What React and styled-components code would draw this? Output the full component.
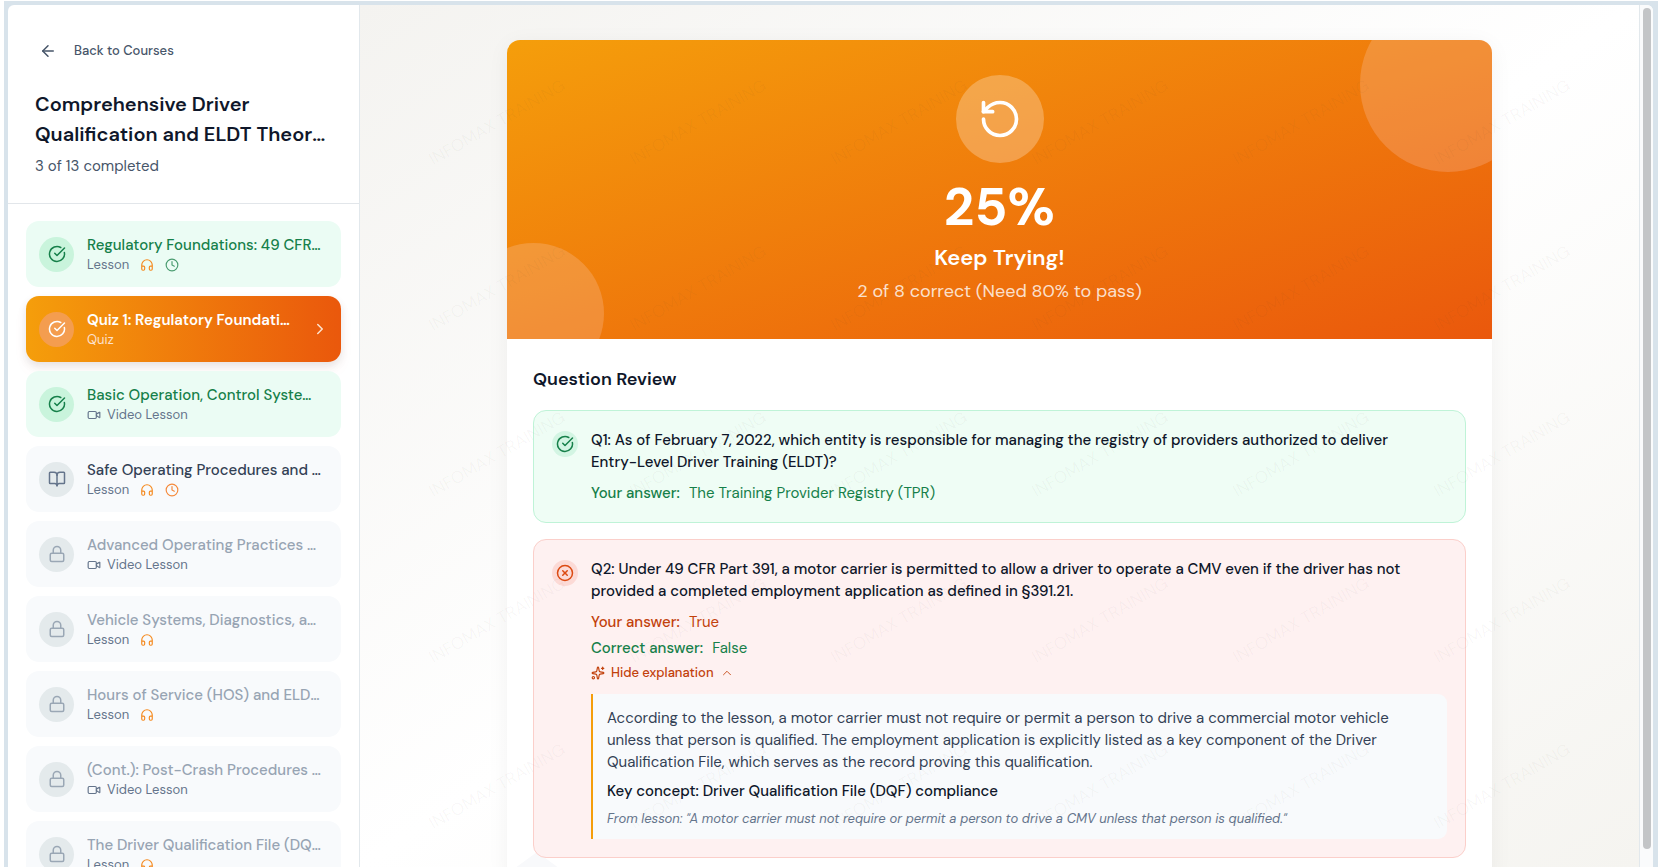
import styled, { createGlobalStyle, css } from 'styled-components';
import {
  ArrowLeft,
  BookOpen,
  ChevronRight,
  ChevronUp,
  CircleCheckBig,
  CircleX,
  Clock,
  Headphones,
  Lock,
  RotateCcw,
  Sparkles,
  Video,
} from 'lucide-react';

const lessons = [
  { title: 'Regulatory Foundations: 49 CFR Parts 380 and 391', type: 'Lesson', state: 'done', audio: true, timer: true },
  { title: 'Quiz 1: Regulatory Foundations', type: 'Quiz', state: 'active' },
  { title: 'Basic Operation, Control Systems and Inspections', type: 'Video Lesson', state: 'done' },
  { title: 'Safe Operating Procedures and Maneuvers', type: 'Lesson', state: 'open', audio: true, timer: true },
  { title: 'Advanced Operating Practices Module', type: 'Video Lesson', state: 'locked' },
  { title: 'Vehicle Systems, Diagnostics, and Maintenance', type: 'Lesson', state: 'locked', audio: true },
  { title: 'Hours of Service (HOS) and ELD Compliance', type: 'Lesson', state: 'locked', audio: true },
  { title: '(Cont.): Post-Crash Procedures Module', type: 'Video Lesson', state: 'locked' },
  { title: 'The Driver Qualification File (DQF) Overview', type: 'Lesson', state: 'locked', audio: true },
];

const stateIcons = {
  done: CircleCheckBig,
  active: CircleCheckBig,
  open: BookOpen,
  locked: Lock,
};

const LessonItem = ({ lesson }) => {
  const { title, type, state, audio, timer } = lesson;
  const Icon = stateIcons[state];
  return (
    <li>
      <ItemButton $state={state} disabled={state === 'locked'}>
        <ItemIcon $state={state}>
          <Icon size={18} />
        </ItemIcon>
        <ItemText>
          <ItemTitle $state={state}>{title}</ItemTitle>
          <ItemMeta $state={state}>
            <MetaLabel>
              {type === 'Video Lesson' && <Video size={14} />}
              {type}
            </MetaLabel>
            {audio && <Headphones size={14} color='#f58a1f' />}
            {timer && (
              <Clock size={14} color={state === 'done' ? '#4a9c70' : '#f58a3c'} />
            )}
          </ItemMeta>
        </ItemText>
        {state === 'active' && <ChevronRight size={18} color='#fde3cf' />}
      </ItemButton>
    </li>
  );
};

const Sidebar = () => (
  <Aside>
    <SideHeader>
      <BackButton>
        <ArrowLeft size={18} />
        Back to Courses
      </BackButton>
      <CourseTitle>
        Comprehensive Driver
        <br />
        Qualification and ELDT Theory Training
      </CourseTitle>
      <Progress>3 of 13 completed</Progress>
    </SideHeader>
    <LessonList>
      {lessons.map((lesson) => (
        <LessonItem key={lesson.title} lesson={lesson} />
      ))}
    </LessonList>
  </Aside>
);

const Result = () => (
  <Hero>
    <Bubble $size={176} $top={-44} $right={-44} />
    <Bubble $size={141} $bottom={-45} $left={-44} />
    <HeroIcon>
      <RotateCcw size={44} />
    </HeroIcon>
    <Score>25%</Score>
    <Verdict>Keep Trying!</Verdict>
    <Tally>2 of 8 correct (Need 80% to pass)</Tally>
  </Hero>
);

const Review = () => (
  <ReviewSection>
    <ReviewTitle>Question Review</ReviewTitle>
    <Questions>
      <Question $correct>
        <Mark $correct>
          <CircleCheckBig size={18} />
        </Mark>
        <QuestionBody>
          <Prompt>
            Q1: As of February 7, 2022, which entity is responsible for managing
            the registry of providers authorized to deliver{' '}
            <NoBreak>Entry-Level</NoBreak> Driver Training (ELDT)?
          </Prompt>
          <Answer $correct>
            <b>Your answer:</b> The Training Provider Registry (TPR)
          </Answer>
        </QuestionBody>
      </Question>
      <Question>
        <Mark>
          <CircleX size={18} />
        </Mark>
        <QuestionBody>
          <Prompt>
            Q2: Under 49 CFR Part 391, a motor carrier is permitted to allow a
            driver to operate a CMV even if the driver has not provided a
            completed employment application as defined in §391.21.
          </Prompt>
          <Answer>
            <b>Your answer:</b> True
          </Answer>
          <Answer $correct $tight>
            <b>Correct answer:</b> False
          </Answer>
          <ToggleButton aria-expanded='true'>
            <Sparkles size={14} />
            Hide explanation
            <ChevronUp size={14} strokeWidth={1.5} />
          </ToggleButton>
          <Explanation>
            <p>
              According to the lesson, a motor carrier must not require or permit
              a person to drive a commercial motor vehicle unless that person is
              qualified. The employment application is explicitly listed as a key
              component of the Driver Qualification File, which serves as the
              record proving this qualification.
            </p>
            <KeyConcept>
              Key concept: Driver Qualification File (DQF) compliance
            </KeyConcept>
            <Quote>
              From lesson: "A motor carrier must not require or permit a person to
              drive a CMV unless that person is qualified."
            </Quote>
          </Explanation>
        </QuestionBody>
      </Question>
      <Pointer />
    </Questions>
  </ReviewSection>
);

const Watermark = () => (
  <WatermarkGrid aria-hidden='true'>
    {Array.from({ length: 30 }, (_, i) => (
      <span key={i}>INFOMAX TRAINING</span>
    ))}
  </WatermarkGrid>
);

const App = () => (
  <Frame>
    <GlobalStyle />
    <Page>
      <Sidebar />
      <Main>
        <Card>
          <Result />
          <Review />
        </Card>
        <Watermark />
      </Main>
      <Track>
        <Thumb />
      </Track>
    </Page>
  </Frame>
);

export default App;

const GlobalStyle = createGlobalStyle`
  *,
  *::before,
  *::after {
    box-sizing: border-box;
  }

  body {
    margin: 0;
    font-family: 'DM Sans', Inter, sans-serif;
    font-size: 15px;
    line-height: 22px;
    color: #0f172a;
  }

  h1, h2, h3, p, ul {
    margin: 0;
    padding: 0;
  }

  button {
    font: inherit;
    border: 0;
    cursor: pointer;
  }

  svg {
    flex-shrink: 0;
  }
`;

const Frame = styled.div`
  height: 100vh;
  overflow: hidden;
  padding: 4px 5px 0 4px;
  background: #d8e3eb;
  border-top: 1px solid #fff;
  border-left: 4px solid #fff;
`;

const Page = styled.div`
  display: flex;
  height: 100%;
  overflow: hidden;
  border-radius: 6px 6px 0 0;
  background: #fff;
`;

const Aside = styled.aside`
  flex: 0 0 352px;
  overflow: hidden;
  border-right: 1px solid #e2e8ec;
`;

const SideHeader = styled.div`
  padding: 28px 27px 26px;
  border-bottom: 1px solid #e2e6ea;
`;

const BackButton = styled.button`
  display: flex;
  align-items: center;
  gap: 17px;
  height: 36px;
  margin-bottom: 20px;
  padding: 0 4px;
  background: none;
  color: #475569;
  font-size: 13px;
  font-weight: 500;
`;

const CourseTitle = styled.h1`
  overflow: hidden;
  white-space: nowrap;
  text-overflow: ellipsis;
  font-size: 20px;
  font-weight: 600;
  line-height: 30px;
`;

const Progress = styled.p`
  margin-top: 6px;
  color: #475569;
`;

const LessonList = styled.ul`
  display: flex;
  flex-direction: column;
  gap: 9px;
  padding: 17px 18px;
  list-style: none;
`;

const itemBackground = {
  done: '#ebfcf4',
  active: 'linear-gradient(to right, #f59e0b, #ea580c)',
  open: '#f8fafc',
  locked: '#f8fafc',
};

const ItemButton = styled.button`
  display: flex;
  align-items: center;
  gap: 13px;
  width: 100%;
  height: 66px;
  padding: 0 12px 0 13px;
  border-radius: 13px;
  text-align: left;
  background: ${({ $state }) => itemBackground[$state]};
  ${({ $state }) =>
    $state === 'active' &&
    css`
      box-shadow: 0 4px 8px rgba(15, 23, 42, 0.1),
        0 8px 16px rgba(234, 88, 12, 0.04);
    `}
`;

const iconColors = {
  done: { background: '#c9f4dc', color: '#16804a' },
  active: { background: '#f49d4f', color: '#ffffff' },
  open: { background: '#e4eaec', color: '#64748b' },
  locked: { background: '#e4eaec', color: '#9aa7b5' },
};

const ItemIcon = styled.span`
  display: grid;
  place-items: center;
  flex: 0 0 35px;
  height: 35px;
  border-radius: 50%;
  background: ${({ $state }) => iconColors[$state].background};
  color: ${({ $state }) => iconColors[$state].color};
`;

const ItemText = styled.span`
  flex: 1;
  min-width: 0;
`;

const titleColors = {
  done: '#16804a',
  active: '#ffffff',
  open: '#334155',
  locked: '#97a4b3',
};

const ItemTitle = styled.span`
  display: block;
  margin-right: 6px;
  overflow: hidden;
  white-space: nowrap;
  text-overflow: ellipsis;
  font-weight: ${({ $state }) => ($state === 'active' ? 600 : 500)};
  color: ${({ $state }) => titleColors[$state]};
`;

const ItemMeta = styled.span`
  display: flex;
  align-items: center;
  gap: 11px;
  font-size: 13px;
  line-height: 18px;
  color: ${({ $state }) => ($state === 'active' ? '#fde0cc' : '#64748b')};
`;

const MetaLabel = styled.span`
  display: flex;
  align-items: center;
  gap: 6px;
`;

const NoBreak = styled.span`
  white-space: nowrap;
`;

const Main = styled.main`
  position: relative;
  flex: 1;
  min-width: 0;
  overflow: hidden;
  padding: 35px 26px;
  background: linear-gradient(to bottom right, #f4f3f0, #ffffff 50%, #f5f4f0);
`;

const Card = styled.article`
  max-width: 985px;
  margin: 0 auto;
  overflow: hidden;
  border-radius: 13px;
  background: #fff;
  box-shadow: 0 4px 22px rgba(15, 23, 42, 0.05);
`;

const Hero = styled.header`
  position: relative;
  display: flex;
  flex-direction: column;
  align-items: center;
  overflow: hidden;
  padding: 35px 35px 34px;
  background: linear-gradient(to bottom right, #f59e0b, #ea580c);
  color: #fff;
`;

const px = (value) => (value === undefined ? 'auto' : `${value}px`);

const Bubble = styled.span`
  position: absolute;
  top: ${({ $top }) => px($top)};
  right: ${({ $right }) => px($right)};
  bottom: ${({ $bottom }) => px($bottom)};
  left: ${({ $left }) => px($left)};
  width: ${({ $size }) => $size}px;
  height: ${({ $size }) => $size}px;
  border-radius: 50%;
  background: rgba(255, 240, 255, 0.18);
`;

const HeroIcon = styled.span`
  display: grid;
  place-items: center;
  width: 88px;
  height: 88px;
  border-radius: 50%;
  background: rgba(255, 255, 255, 0.26);
`;

const Score = styled.p`
  margin-top: 17px;
  font-size: 53px;
  font-weight: 700;
  line-height: 53px;
`;

const Verdict = styled.h2`
  margin-top: 10px;
  font-size: 22px;
  font-weight: 600;
  line-height: 30px;
`;

const Tally = styled.p`
  margin-top: 4px;
  font-size: 18px;
  line-height: 28px;
  color: rgba(255, 255, 255, 0.8);
`;

const ReviewSection = styled.section`
  padding: 26px;
`;

const ReviewTitle = styled.h3`
  margin-bottom: 17px;
  font-size: 18px;
  font-weight: 600;
  line-height: 28px;
`;

const Questions = styled.div`
  position: relative;
  display: flex;
  flex-direction: column;
  gap: 16px;
`;

const Question = styled.div`
  position: relative;
  z-index: 1;
  display: flex;
  gap: 13px;
  padding: 18px;
  border: 1px solid ${({ $correct }) => ($correct ? '#bff3d7' : '#fbcfca')};
  border-radius: 13px;
  background: ${({ $correct }) => ($correct ? '#effdf5' : '#fef1f1')};
`;

const Mark = styled.span`
  display: grid;
  place-items: center;
  flex: 0 0 26px;
  height: 26px;
  margin-top: 2px;
  border-radius: 50%;
  background: ${({ $correct }) => ($correct ? '#d3f5e3' : '#fcdad6')};
  color: ${({ $correct }) => ($correct ? '#16804a' : '#dc4a12')};
`;

const QuestionBody = styled.div`
  flex: 1;
  min-width: 0;
`;

const Prompt = styled.p`
  font-weight: 500;
`;

const Answer = styled.p`
  margin-top: ${({ $tight }) => ($tight ? 4 : 9)}px;
  color: ${({ $correct }) => ($correct ? '#16804a' : '#c2410c')};

  b {
    margin-right: 5px;
    font-weight: 500;
  }
`;

const ToggleButton = styled.button`
  display: flex;
  align-items: center;
  gap: 6px;
  margin-top: 5px;
  padding: 0;
  background: none;
  color: #c2410c;
  font-size: 13px;
  font-weight: 500;
  line-height: 18px;
`;

const Explanation = styled.div`
  display: flex;
  flex-direction: column;
  gap: 7px;
  margin-top: 12px;
  padding: 13px 14px 10px;
  border-left: 2px solid #f59e0b;
  border-radius: 0 9px 9px 0;
  background: #f8fafc;
  color: #334155;
`;

const KeyConcept = styled.p`
  font-weight: 500;
  color: #0f172a;
`;

const Quote = styled.p`
  font-size: 13px;
  font-style: italic;
  line-height: 20px;
  color: #64748b;
`;

const Pointer = styled.span`
  position: absolute;
  top: 100%;
  left: -26px;
  width: 60px;
  height: 22px;
  margin-top: -6px;
  background: #f8f9fb;
  clip-path: polygon(50% 0, 100% 100%, 0 100%);
`;

const WatermarkGrid = styled.div`
  position: absolute;
  inset: 34px 0 auto;
  z-index: 2;
  display: grid;
  grid-template-columns: repeat(6, 201px);
  grid-auto-rows: 166px;
  justify-content: center;
  place-items: center;
  pointer-events: none;
  font-size: 17px;
  color: rgba(71, 60, 50, 0.04);
  white-space: nowrap;

  span {
    transform: rotate(-30deg);
  }
`;

const Track = styled.div`
  flex: 0 0 14px;
  padding: 3px 2px 18px 3px;
  border-left: 1px solid #e2e8ec;
  background: #fafbfc;
`;

const Thumb = styled.div`
  width: 8px;
  height: 100%;
  border-radius: 4px;
  background: #c3c5c7;
`;
